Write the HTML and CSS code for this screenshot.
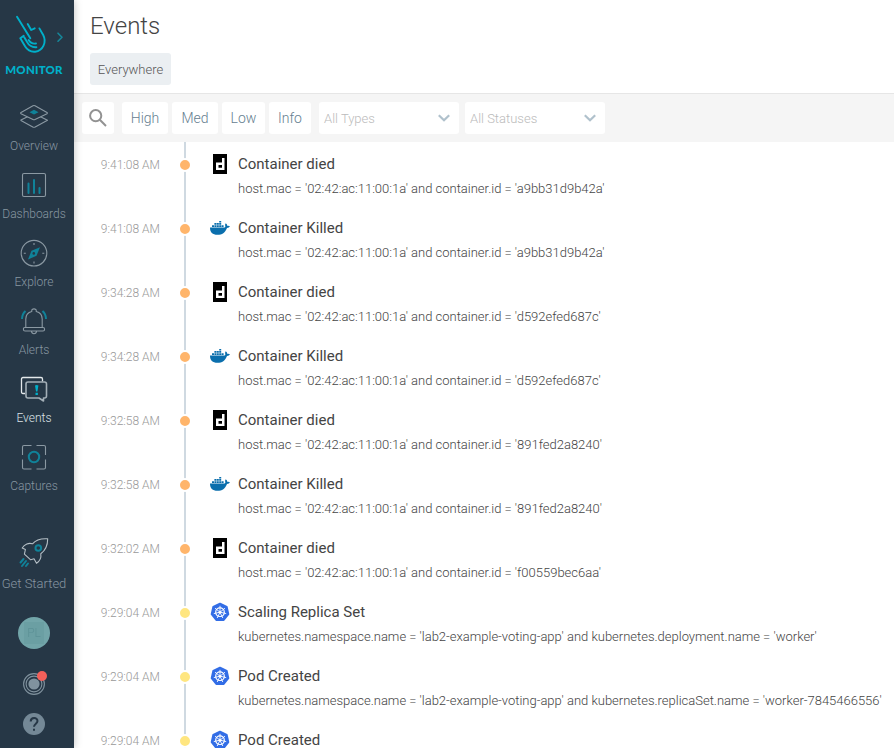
FILE: index.html
```html
<!DOCTYPE html>
<html lang="en">
<head>
<meta charset="utf-8">
<title>Events</title>
<link rel="stylesheet" href="styles.css">
</head>
<body>
<svg class="sprite" aria-hidden="true">
  <symbol id="sysdig" viewBox="0 0 14 20"><path fill="#000" d="M0 0h14v20H0z"/><path fill="#fff" fill-rule="evenodd" d="M9 4h2.500v12H3V8.500h6zM5.500 11v2.700H9V11z"/></symbol>
  <symbol id="docker" viewBox="0 0 20 16"><path fill="#0b6fad" d="M0 6.500h14.600q.9-.3.700-1.300-.7-1.500.4-2.900 1.500.9 1.500 2.500 1.600-.3 2.800.5-.8 1.500-3 1.600C15.300 11.500 12 13.800 7.500 13.800 2.500 13.800 0 11.500 0 6.500z"/><path fill="#0b6fad" d="M2 4.200h2v1.800H2zM4.400 4.200h2v1.800h-2zM6.800 4.200h2v1.800h-2zM9.200 4.200h2v1.800h-2zM11.600 4.200h2v1.800h-2zM4.400 2h2v1.800h-2zM6.800 2h2v1.800h-2zM9.200 2h2v1.800h-2zM9.200 0h2v1.600h-2z"/></symbol>
  <symbol id="kube" viewBox="0 0 20 20"><path fill="#326de6" stroke="#326de6" stroke-width="2" stroke-linejoin="round" d="M10 1.700l6.700 3.200 1.600 7.200-4.600 5.800H6.300l-4.600-5.800 1.600-7.200z"/><g fill="none" stroke="#fff"><circle cx="10" cy="10.200" r="4.300" stroke-width="1.200"/><path stroke-width=".9" d="M10 3.800v5.500M10 10.200l5-4M10 10.200l6.200 1.400M10 10.200l2.800 5.800M10 10.200L7.200 16M10 10.200l-6.200 1.400M10 10.200l-5-4"/></g><circle cx="10" cy="10.200" r="1.300" fill="#fff"/></symbol>
  <symbol id="chevron" viewBox="0 0 12 8"><path fill="none" stroke="#b0c1cc" stroke-width="2.200" d="M.8 1.200L6 6.300l5.200-5.100"/></symbol>
</svg>
<div class="app">
  <aside class="sidebar">
    <div class="brand">
      <svg class="logo" viewBox="0 0 68 60" fill="none" stroke="#00b0ca" stroke-width="1.900" stroke-linecap="round" stroke-linejoin="round">
        <path d="M17 16.700l13.300 21.600M27.700 24l3.500 6 3.500-1.700M39.400 28.400l3.800 6.600c3.700 7-.2 15.900-8 16.700-4.400.4-7.700-1.500-10-5.200l-4.900-8.300 3.400-2.500M23.500 36l3.300 5.600c2.200 4 5.300 6 9.600 5.600M28.600 40c1.500 2.700 4 4 7.400 3.500"/>
        <path stroke="#168799" stroke-width="1.600" d="M58 33.200l4 4-4 4"/>
      </svg>
      <div class="product">MONITOR</div>
    </div>
    <nav class="nav">
      <a class="item"><svg viewBox="0 0 30 30"><path d="M1.500 17.300L15 10.500l13.500 6.800L16.200 24q-1.200.6-2.400 0L1.500 17.300"/><path class="cover" d="M2 9.500L14 2.800q1-.5 2 0l12 6.700q.8.600 0 1.200l-12 5.800q-1 .5-2 0L2 10.700q-.8-.6 0-1.200z"/><path class="solid" d="M15 6.700l4.500 2.500-4.500 2.400-4.500-2.400z"/></svg><span>Overview</span></a>
      <a class="item"><svg viewBox="0 0 30 30"><rect x="3.500" y="2.500" width="23" height="23" rx="1.500"/><path class="accent bars" d="M9.500 22V12.500M15 22V9M20.500 22v-5"/></svg><span>Dashboards</span></a>
      <a class="item"><svg viewBox="0 0 30 30"><circle cx="15" cy="14.200" r="12.800"/><path d="M15 4v2M15 22.500v2M4.800 14.200h2M23.300 14.200h2"/><path class="solid" d="M21 8.200l-3.500 8.500-8.500 3.700 3.500-8.700z"/><circle class="hole" cx="14.800" cy="14.400" r="1.300"/></svg><span>Explore</span></a>
      <a class="item"><svg viewBox="0 0 30 30"><path d="M6.800 20.500V12c0-4 2.500-6.700 6-7.500V2.800q2.200-2 4.400 0v1.700c3.500.8 6 3.500 6 7.500v8.500M6 20.500h18q1.600 0 1.600 1.700T24 24H6q-1.600 0-1.600-1.800T6 20.500zM12.300 24.200q.5 2.600 2.700 2.600t2.700-2.600"/><path class="accent thick" d="M6.500 4C4 6.300 3 8.700 3 12M23.500 4C26 6.300 27 8.700 27 12"/></svg><span>Alerts</span></a>
      <a class="item active"><svg viewBox="0 0 30 30"><path class="bright" d="M6 18.500H4q-1.500 0-1.500-1.500V4Q2.500 2.500 4 2.500h18q1.500 0 1.500 1.500v2.500"/><path class="bubble" d="M9 7h16.500q2 0 2 2v12q0 2-2 2h-1v3l-4.500-3H9q-2 0-2-2V9q0-2 2-2z"/><path class="solid vivid" d="M16 10.500q1.700-1 3.400 0l-1 6h-1.400zM16.500 17.700h2.400v2.300h-2.400z"/></svg><span>Events</span></a>
      <a class="item"><svg viewBox="0 0 30 30"><path d="M3.500 12V4Q3.500 2.500 5 2.500h7.500M17.500 2.500H25q1.500 0 1.500 1.500v8M26.500 16.500v8q0 1.500-1.500 1.500h-7.500M12.500 26H5q-1.500 0-1.500-1.500v-8"/><circle class="accent ring" cx="15" cy="14" r="5.200"/></svg><span>Captures</span></a>
    </nav>
    <a class="item start"><svg viewBox="0 0 30 30"><path class="light" d="M28.700 1.800c-6.500-.5-11.500.7-15.200 5-3.700-1.300-8 .2-10.300 4.200l3.200 1.500-1 4.700 6.300 5.600 3.300-1 2.500 4.500c3.300-2.300 5-5 4.300-9.500 5-3.700 6.900-8.500 6.900-15z"/><circle class="accent ring" cx="19.300" cy="11" r="2.800"/><path class="accent bars" d="M4.500 22l-3 3.500M7 24l-4 5M9 26.500L7 29"/></svg><span>Get Started</span></a>
    <div class="avatar"><span>PL</span></div>
    <svg class="signal" viewBox="0 0 30 26"><g fill="none" stroke="#80929e" stroke-width="1.100"><circle cx="15" cy="14" r="10.400"/><circle cx="15" cy="14" r="7.900"/></g><circle cx="15" cy="14" r="5.600" fill="#80929e"/><circle cx="23" cy="6" r="5" fill="#f4605a"/></svg>
    <svg class="help" viewBox="0 0 22 22"><circle cx="11" cy="11" r="11" fill="#748896"/><path fill="none" stroke="#263746" stroke-width="2" d="M7.700 8.500c0-4.600 6.800-4.600 6.800-.4 0 2.500-3.500 2.700-3.500 5.700M11 15.800v2"/></svg>
  </aside>
  <main class="main">
    <header class="header">
      <h1>Events</h1>
      <button class="scope">Everywhere</button>
    </header>
    <div class="toolbar">
      <button class="search" aria-label="Search"><svg viewBox="0 0 18 18" fill="none" stroke="#929292" stroke-width="2"><circle cx="6.700" cy="6.700" r="5.600"/><path d="M10.800 10.800l6.200 6.200"/></svg></button>
      <button class="level high">High</button>
      <button class="level med">Med</button>
      <button class="level low">Low</button>
      <button class="level info">Info</button>
      <div class="select types">All Types<svg><use href="#chevron"/></svg></div>
      <div class="select">All Statuses<svg><use href="#chevron"/></svg></div>
    </div>
    <section class="events">
      <article class="event"><time>9:41:08 AM</time><i class="mark"></i><svg class="kind"><use href="#sysdig"/></svg><div><h2>Container died</h2><p>host.mac = '02:42:ac:11:00:1a' and container.id = 'a9bb31d9b42a'</p></div></article>
      <article class="event"><time>9:41:08 AM</time><i class="mark"></i><svg class="kind whale"><use href="#docker"/></svg><div><h2>Container Killed</h2><p>host.mac = '02:42:ac:11:00:1a' and container.id = 'a9bb31d9b42a'</p></div></article>
      <article class="event"><time>9:34:28 AM</time><i class="mark"></i><svg class="kind"><use href="#sysdig"/></svg><div><h2>Container died</h2><p>host.mac = '02:42:ac:11:00:1a' and container.id = 'd592efed687c'</p></div></article>
      <article class="event"><time>9:34:28 AM</time><i class="mark"></i><svg class="kind whale"><use href="#docker"/></svg><div><h2>Container Killed</h2><p>host.mac = '02:42:ac:11:00:1a' and container.id = 'd592efed687c'</p></div></article>
      <article class="event"><time>9:32:58 AM</time><i class="mark"></i><svg class="kind"><use href="#sysdig"/></svg><div><h2>Container died</h2><p>host.mac = '02:42:ac:11:00:1a' and container.id = '891fed2a8240'</p></div></article>
      <article class="event"><time>9:32:58 AM</time><i class="mark"></i><svg class="kind whale"><use href="#docker"/></svg><div><h2>Container Killed</h2><p>host.mac = '02:42:ac:11:00:1a' and container.id = '891fed2a8240'</p></div></article>
      <article class="event"><time>9:32:02 AM</time><i class="mark"></i><svg class="kind"><use href="#sysdig"/></svg><div><h2>Container died</h2><p>host.mac = '02:42:ac:11:00:1a' and container.id = 'f00559bec6aa'</p></div></article>
      <article class="event low-level"><time>9:29:04 AM</time><i class="mark"></i><svg class="kind"><use href="#kube"/></svg><div><h2>Scaling Replica Set</h2><p>kubernetes.namespace.name = 'lab2-example-voting-app' and kubernetes.deployment.name = 'worker'</p></div></article>
      <article class="event low-level"><time>9:29:04 AM</time><i class="mark"></i><svg class="kind"><use href="#kube"/></svg><div><h2>Pod Created</h2><p>kubernetes.namespace.name = 'lab2-example-voting-app' and kubernetes.replicaSet.name = 'worker-7845466556'</p></div></article>
      <article class="event low-level"><time>9:29:04 AM</time><i class="mark"></i><svg class="kind"><use href="#kube"/></svg><div><h2>Pod Created</h2></div></article>
    </section>
  </main>
</div>
</body>
</html>
```
FILE: styles.css
```css
* { box-sizing: border-box; }
body { margin: 0; font-family: Roboto, "Liberation Sans", sans-serif; font-weight: 300; color: #444; background: #fff; overflow: hidden; }
button { border: 0; font: inherit; padding: 0; }
.sprite { display: none; }
.app { display: flex; height: 748px; overflow: hidden; }

.sidebar { flex: none; width: 74px; height: 748px; padding-right: 6px; background: #263746; box-shadow: 0 0 8px rgba(0,0,0,.25); display: flex; flex-direction: column; align-items: center; z-index: 1; }
.brand { height: 99px; width: 68px; }
.logo { display: block; width: 68px; height: 60px; }
.product { margin-top: 3px; font: 900 11.500px/14px Lato, sans-serif; letter-spacing: .2px; text-align: center; color: #00b0ca; }
.nav { display: flex; flex-direction: column; }
.item { display: flex; flex-direction: column; align-items: center; width: 68px; height: 68px; padding-top: 4px; font-size: 12px; line-height: 16px; color: #8796a1; white-space: nowrap; }
.item svg { width: 30px; height: 30px; margin-bottom: 5px; overflow: visible; fill: none; stroke: #8b99a3; stroke-width: 1.100; stroke-linejoin: round; }
.item .cover { fill: #263746; }
.item .solid { fill: #108299; stroke: none; }
.item .accent { stroke: #108299; }
.item .bars { stroke-width: 2; stroke-linecap: round; }
.item .thick { stroke-width: 2; }
.item .ring { stroke-width: 2; }
.item .hole { fill: #263746; stroke: none; }
.item .bright { stroke: #e3e8eb; stroke-width: 1.300; }
.item .bubble { stroke: #a3afb7; stroke-width: 1.600; fill: #263746; }
.item .light { stroke: #b4bec5; }
.item .vivid { fill: #00b0ca; }
.active { color: #dce2e6; }
.start { margin-top: 26px; height: 72px; font-size: 13px; }
.start svg { margin-bottom: 9px; }
.avatar { width: 32px; height: 32px; margin-top: 12px; border-radius: 50%; background: #72a5a9; color: #5c9196; font-size: 12px; line-height: 22px; display: flex; align-items: center; justify-content: center; }
.avatar span { width: 20px; height: 22px; background: #6b9fa3; text-align: center; filter: blur(.6px); }
.signal { width: 30px; height: 26px; margin-top: 21px; }
.help { width: 22px; height: 22px; margin-top: 17px; }

.main { flex: 1; min-width: 0; display: flex; flex-direction: column; }
.header { flex: none; height: 94px; padding: 10px 16px 0; border-bottom: 1px solid #e6e6e6; }
h1 { margin: 0 0 11px; font-size: 24px; line-height: 32px; font-weight: 300; }
.scope { display: block; width: 81px; height: 32px; border-radius: 3px; background: #ebeff2; color: #555; font-size: 13px; }
.toolbar { flex: none; display: flex; align-items: center; gap: 4px; height: 48px; padding-left: 8px; background: #f5f5f5; }
.toolbar button { height: 32px; border-radius: 3px; background: #fff; }
.search { width: 32px; margin-right: 4px; display: flex; align-items: center; justify-content: center; }
.search svg { width: 18px; height: 18px; }
.level { color: #668090; font-size: 14px; }
.high, .med { width: 46px; }
.low { width: 43px; }
.info { width: 42px; }
.select { width: 140px; height: 32px; padding: 0 9px 0 5px; border-radius: 3px; background: #fff; color: #bbb; font-size: 13px; display: flex; align-items: center; justify-content: space-between; }
.select svg { width: 12px; height: 8px; }
.types { margin: 0 2px 0 4px; }

.events { flex: 1; overflow: hidden; }
.event { display: grid; grid-template-columns: 86px 50px 28px 1fr; height: 64px; white-space: nowrap; background: linear-gradient(#cfd9e1, #cfd9e1) 110px 0 / 2px 64px no-repeat; }
time { padding-top: 15px; font-size: 12px; line-height: 16px; text-align: right; color: #999; }
.mark { width: 14px; height: 14px; margin: 16px 0 0 18px; border: 2px solid #fff; border-radius: 50%; background: #ffb56b; }
.low-level .mark { background: #ffe680; }
.kind { width: 20px; height: 20px; margin-top: 12px; }
.whale { height: 16px; margin-top: 15px; }
h2 { margin: 12px 0 0; font-size: 15px; line-height: 20px; font-weight: 400; }
p { margin: 6px 0 0; font-size: 13px; line-height: 17px; letter-spacing: -.01px; color: #444; }
```
